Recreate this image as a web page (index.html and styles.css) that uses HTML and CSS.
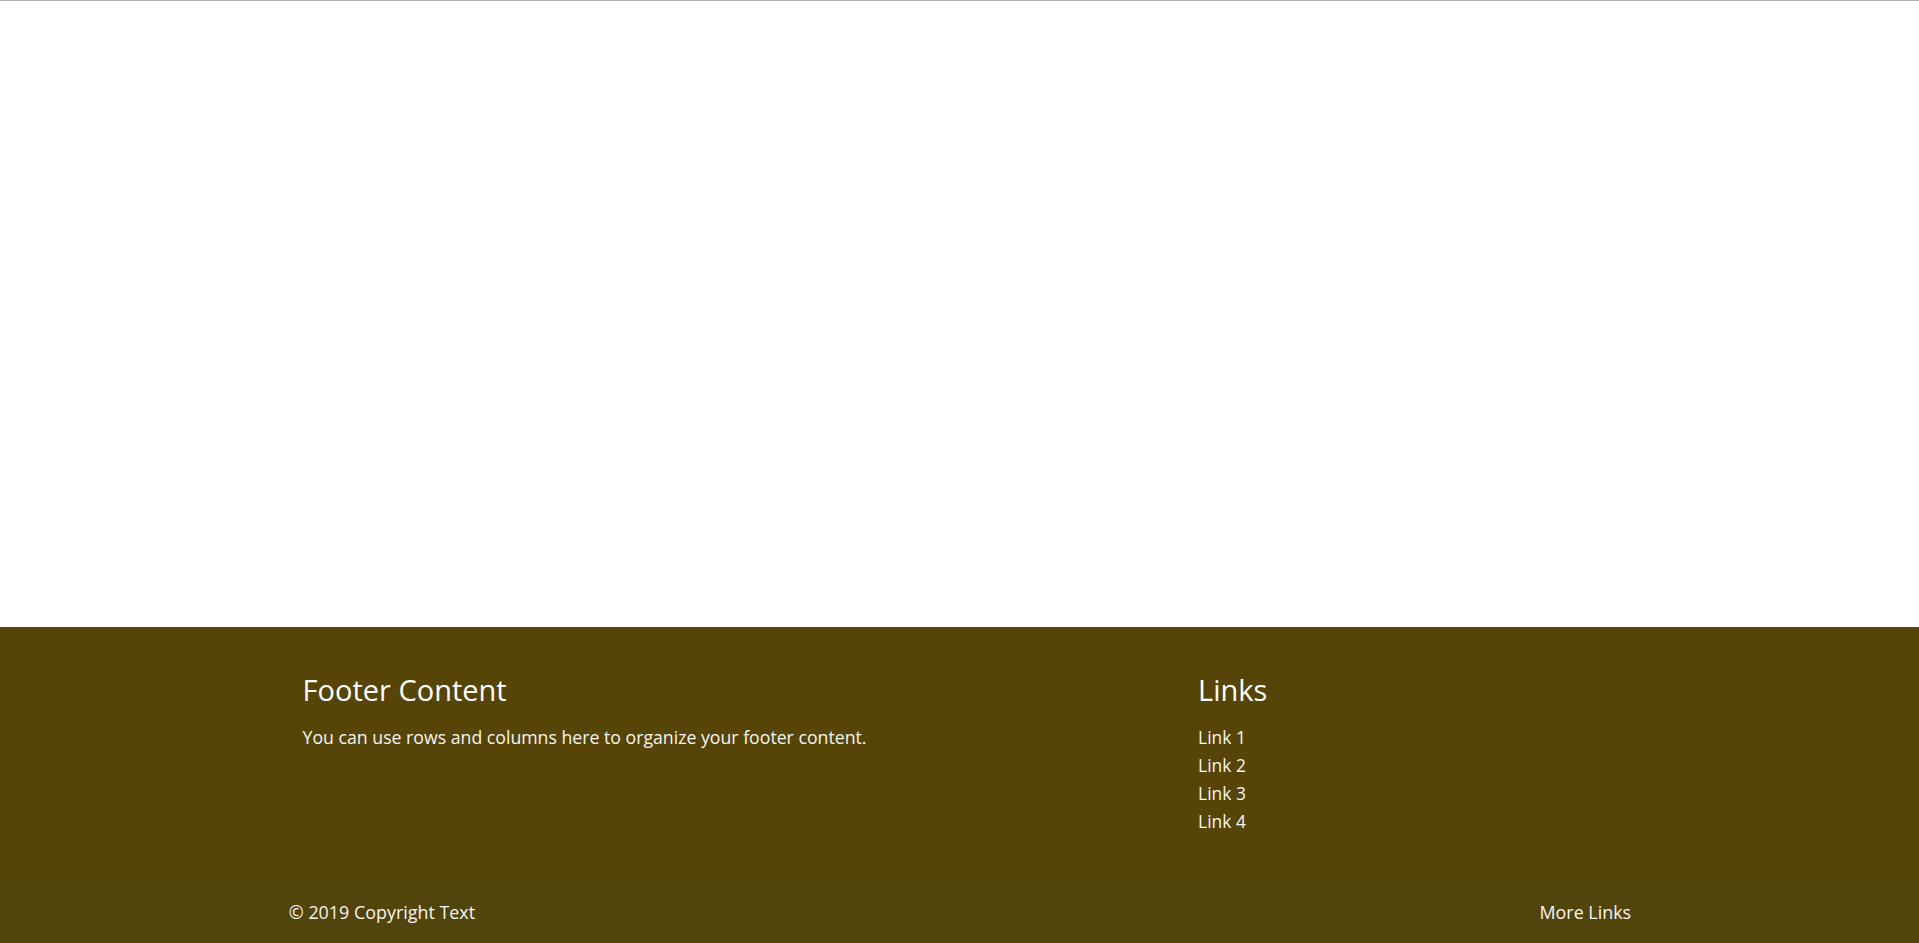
FILE: index.html
```html
<!DOCTYPE html>
<html lang="en">
<head>
<meta charset="utf-8">
<title>Footer</title>
<link rel="stylesheet" href="styles.css">
</head>
<body>
<div class="page">
  <div class="top-rule"></div>
  <main class="main"></main>
  <footer class="page-footer">
    <div class="container">
      <div class="row">
        <div class="col col-6">
          <h5 class="footer-title">Footer Content</h5>
          <p class="footer-text">You can use rows and columns here to organize your footer content.</p>
        </div>
        <div class="col col-4 offset-2">
          <h5 class="footer-title">Links</h5>
          <ul class="footer-links">
            <li><a href="#!">Link 1</a></li>
            <li><a href="#!">Link 2</a></li>
            <li><a href="#!">Link 3</a></li>
            <li><a href="#!">Link 4</a></li>
          </ul>
        </div>
      </div>
    </div>
    <div class="footer-copyright">
      <div class="container copyright-inner">
        <span>© 2019 Copyright Text</span>
        <a class="more-links" href="#!">More Links</a>
      </div>
    </div>
  </footer>
</div>
</body>
</html>
```

FILE: styles.css
```css
html, body {
  margin: 0;
  padding: 0;
  height: 100%;
}

body {
  font-family: "Open Sans", "Noto Sans", "Liberation Sans", sans-serif;
  background: #ffffff;
  color: #222;
}

.page {
  display: flex;
  flex-direction: column;
  height: 943px;
}

.top-rule {
  height: 1px;
  background: #b0b0b0;
  flex: none;
}

.main {
  flex: 1;
}

.page-footer {
  flex: none;
  background: #564506;
  color: #ffffff;
}

.container {
  width: 70%;
  margin: 0 auto;
}

.row {
  display: flex;
  padding-top: 45px;
  padding-bottom: 44.6px;
}

.col {
  box-sizing: border-box;
  padding: 0 11.25px 0 14.75px;
}

.col-6 {
  width: 50%;
}

.col-4 {
  width: 33.3333%;
}

.offset-2 {
  margin-left: 16.6667%;
}

.footer-title {
  margin: 0 0 16px 0;
  font-size: 29px;
  line-height: 36px;
  font-weight: 400;
  color: #ffffff;
}

.footer-text {
  margin: 0;
  font-size: 17.7px;
  line-height: 27.8px;
  color: #f5f5f5;
}

.footer-links {
  list-style: none;
  margin: 0;
  padding: 0;
}

.footer-links li {
  font-size: 17.4px;
  line-height: 27.8px;
}

.footer-links a {
  color: #f5f5f5;
  text-decoration: none;
}

.footer-copyright {
  background: #51450b;
  height: 63px;
  display: flex;
  align-items: center;
}

.copyright-inner {
  display: flex;
  justify-content: space-between;
  align-items: center;
  box-sizing: border-box;
  padding-left: 1px;
  font-size: 17.9px;
  color: #f5f5f5;
}

.more-links {
  color: #f5f5f5;
  text-decoration: none;
}
```
